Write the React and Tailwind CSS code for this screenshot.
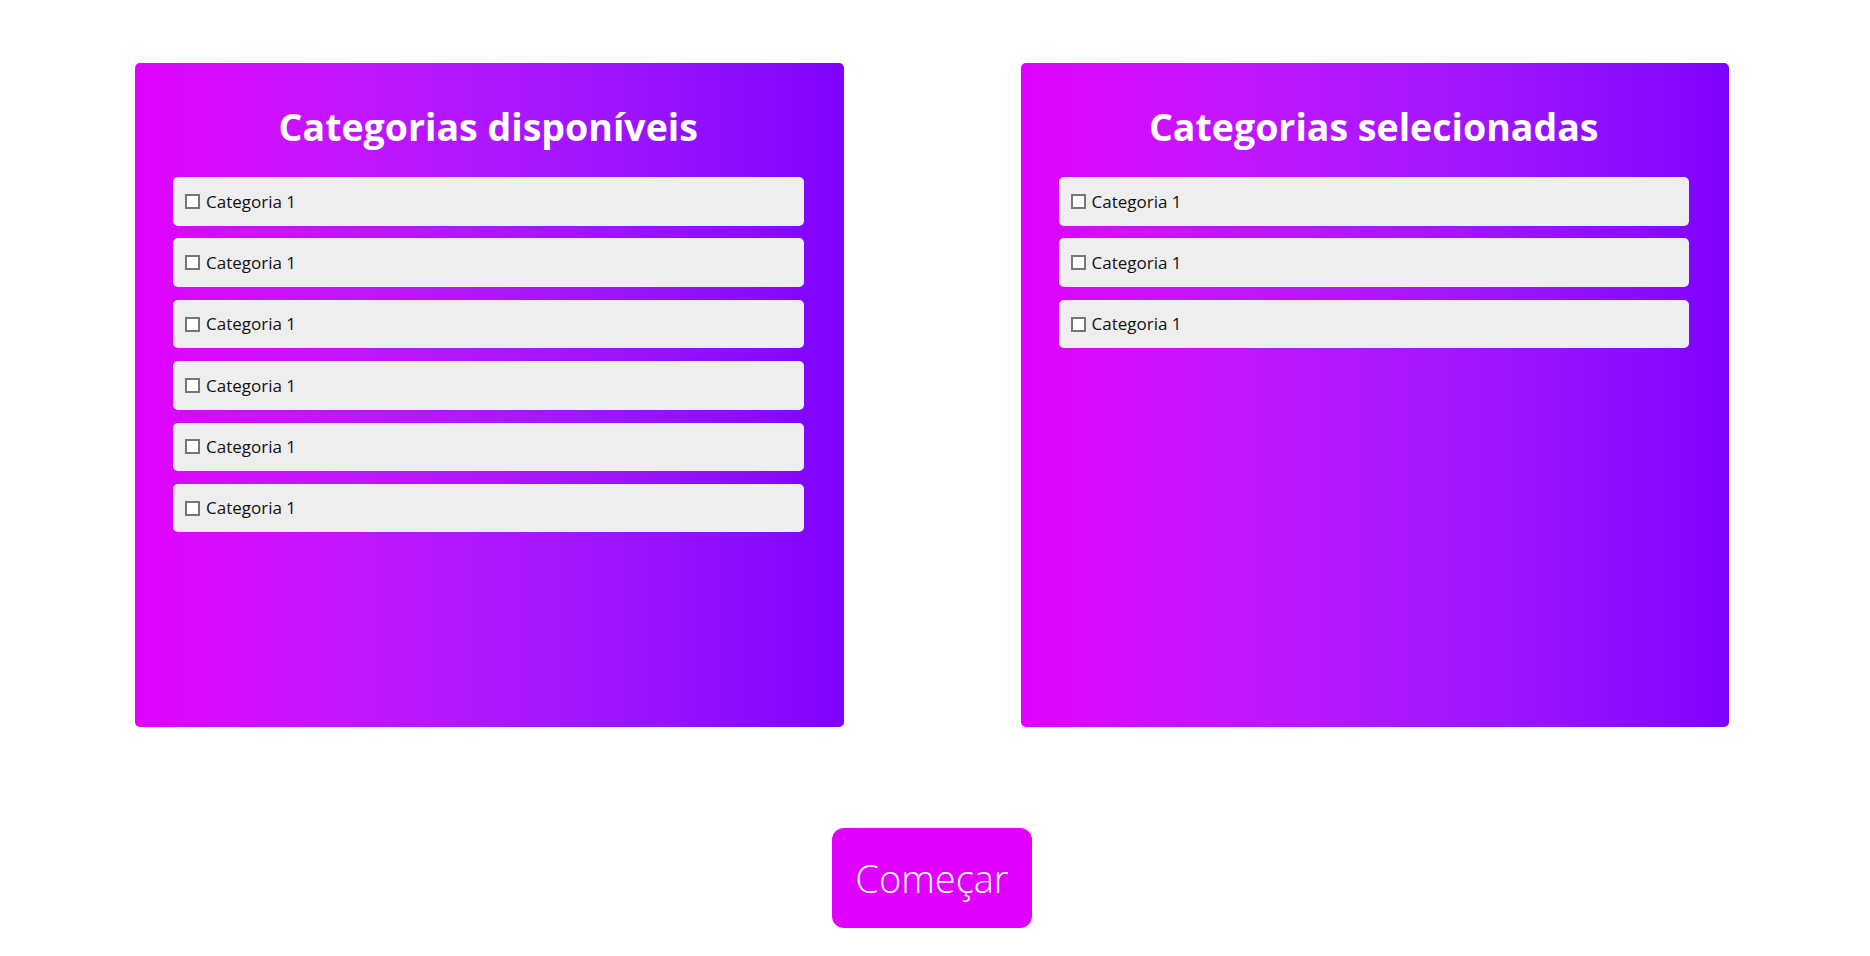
import React from 'react';

const available = Array(6).fill('Categoria 1');
const selected = Array(3).fill('Categoria 1');

const CategoryItem = ({ label }) => (
  <div className="flex items-center h-[48.5px] px-[12px] rounded-[5px] bg-[#eeeeee]">
    <span className="w-[15px] h-[15px] border-2 border-[#767676] bg-white shrink-0" />
    <span className="ml-[6px] text-[17px] text-[#111111]">{label}</span>
  </div>
);

const Panel = ({ title, items }) => (
  <div className="w-[709px] h-[664px] rounded-[5px] bg-linear-to-r from-[#e100ff] to-[#7f00ff] pl-[38px] pr-[40px] pt-[41px]">
    <h2 className="text-center text-white font-bold text-[37.5px] leading-[46px] mb-[27px]">{title}</h2>
    <div className="flex flex-col gap-[12.9px]">
      {items.map((item, i) => (
        <CategoryItem key={i} label={item} />
      ))}
    </div>
  </div>
);

export default function App() {
  return (
    <div className="min-h-screen bg-white font-['Open_Sans',sans-serif]">
      <div className="w-[1594px] ml-[135px] pt-[63px]">
        <div className="flex gap-[177px]">
          <Panel title="Categorias disponíveis" items={available} />
          <Panel title="Categorias selecionadas" items={selected} />
        </div>
        <div className="flex justify-center mt-[101px]">
          <button className="w-[200px] h-[100px] rounded-[12px] bg-[#e100ff] text-white text-[38px] font-light">
            Começar
          </button>
        </div>
      </div>
    </div>
  );
}
